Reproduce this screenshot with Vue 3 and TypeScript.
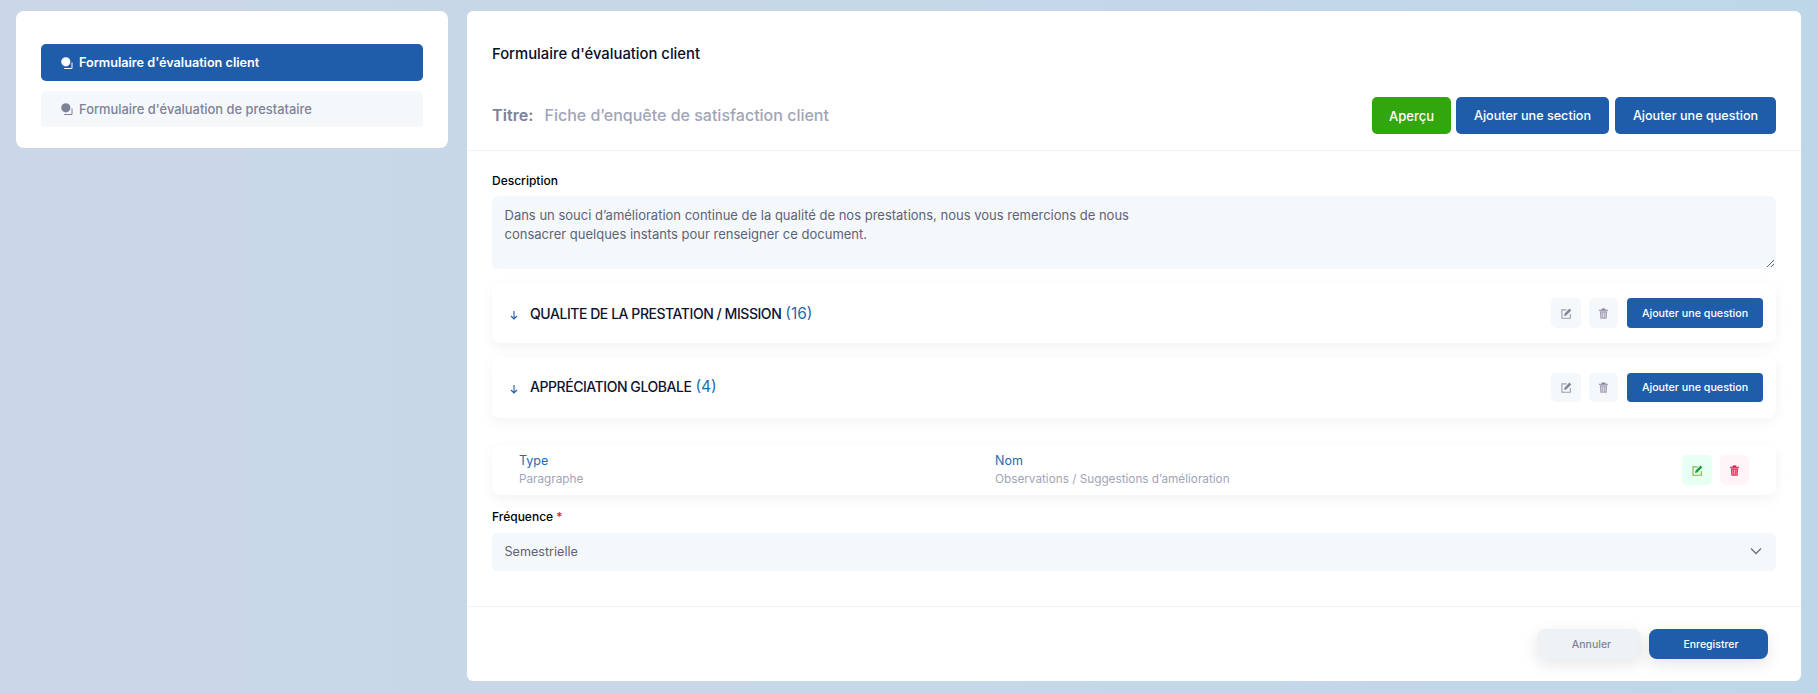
<script setup lang="ts">
const sections = [
  { title: 'QUALITE DE LA PRESTATION / MISSION', count: 16 },
  { title: 'APPRÉCIATION GLOBALE', count: 4 },
]
</script>

<template>
  <div class="page">
    <aside class="side">
      <a class="nav active">
        <svg class="navicon" viewBox="0 0 12 12"><circle cx="4.8" cy="4.8" r="4.6" fill="currentColor"/><path d="M11 5.5v6H3.2" fill="none" stroke="currentColor" stroke-width="1"/></svg>
        Formulaire d'évaluation client
      </a>
      <a class="nav">
        <svg class="navicon" viewBox="0 0 12 12"><circle cx="4.8" cy="4.8" r="4.6" fill="currentColor"/><path d="M11 5.5v6H3.2" fill="none" stroke="currentColor" stroke-width="1"/></svg>
        Formulaire d'évaluation de prestataire
      </a>
    </aside>
    <main class="card">
      <div class="top">
        <h1 class="h">Formulaire d'évaluation client</h1>
        <div class="titlerow">
          <div class="titl"><span class="tl">Titre:</span><span class="tv">Fiche d’enquête de satisfaction client</span></div>
          <div class="acts">
            <button class="btn green">Aperçu</button>
            <button class="btn blue w1">Ajouter une section</button>
            <button class="btn blue w2">Ajouter une question</button>
          </div>
        </div>
      </div>
      <div class="body">
        <label class="lab">Description</label>
        <div class="ta">Dans un souci d’amélioration continue de la qualité de nos prestations, nous vous remercions de nous<br>consacrer quelques instants pour renseigner ce document.
          <svg class="grip" viewBox="0 0 10 10"><path d="M9 2 2 9M9 6 6 9" stroke="#666" fill="none"/></svg>
        </div>
        <div v-for="(s, i) in sections" :key="s.title" class="sec" :class="{ second: i === 1 }">
          <svg class="arrow" viewBox="0 0 12 12"><path d="M6 2v8M3 7l3 3 3-3" fill="none" stroke="#1f5dab" stroke-width="1.1"/></svg>
          <span class="st">{{ s.title }}</span>
          <span class="sc">({{ s.count }})</span>
          <span class="grow"></span>
          <button class="ib ib1">
            <svg class="ic" viewBox="0 0 12 12"><path d="M6 2H1v9.2h9.2V6.5" fill="none" stroke="#9c9eae" stroke-width="1.2"/><path d="M3.4 8.6l.4-2.4L9.2.6l2 2-5.5 5.6z" fill="#83859a"/></svg>
          </button>
          <button class="ib ib2">
            <svg class="ic" viewBox="0 0 12 12"><path d="M1 1.8h10v1.3H1zM4 .6h4v1.4H4z" fill="#83859a"/><path d="M2 3.6h8l-.5 8H2.5z" fill="#a9a2b8"/><path d="M4.2 5v5.5M6 5v5.5M7.8 5v5.5" stroke="#e8e9f2" stroke-width=".8"/></svg>
          </button>
          <button class="sbtn">Ajouter une question</button>
        </div>
        <div class="rowcard">
          <div class="col c1"><div class="k">Type</div><div class="v">Paragraphe</div></div>
          <div class="col c2"><div class="k">Nom</div><div class="v">Observations / Suggestions d’amélioration</div></div>
          <span class="grow"></span>
          <button class="ib g">
            <svg class="ic" viewBox="0 0 12 12"><path d="M6 2H1v9.2h9.2V6.5" fill="none" stroke="#8db33a" stroke-width="1.2"/><path d="M3.4 8.6l.4-2.4L9.2.6l2 2-5.5 5.6z" fill="#14a03c"/></svg>
          </button>
          <button class="ib r">
            <svg class="ic" viewBox="0 0 12 12"><path d="M1 1.8h10v1.3H1zM4 .6h4v1.4H4z" fill="#d4133f"/><path d="M2 3.6h8l-.5 8H2.5z" fill="#e2375f"/><path d="M4.2 5v5.5M6 5v5.5M7.8 5v5.5" stroke="#fbb7cb" stroke-width=".8"/></svg>
          </button>
        </div>
        <label class="lab freq">Fréquence <span class="req">*</span></label>
        <div class="sel">
          <span>Semestrielle</span>
          <svg class="chev" viewBox="0 0 14 14"><path d="M2 4.5l5 5 5-5" fill="none" stroke="#6e7280" stroke-width="1.4"/></svg>
        </div>
      </div>
      <div class="foot">
        <button class="fb cancel">Annuler</button>
        <button class="fb save">Enregistrer</button>
      </div>
    </main>
  </div>
</template>

<style>
html, body { margin: 0; }
</style>

<style scoped>
.page {
  box-sizing: border-box;
  width: 1818px;
  height: 693px;
  padding: 11px 17px 12px 16px;
  display: flex;
  align-items: flex-start;
  gap: 19px;
  overflow: hidden;
  background: linear-gradient(90deg, #cad7e8 0%, #c6d7e8 50%, #bdd7e9 100%);
  font-family: Inter, "Liberation Sans", sans-serif;
  color: #0f1330;
}
.side {
  box-sizing: border-box;
  width: 432px;
  height: 137px;
  flex: none;
  background: #fff;
  border-radius: 8px;
  padding: 33px 25px 0;
  display: flex;
  flex-direction: column;
  gap: 10px;
}
.nav {
  height: 36px;
  border-radius: 5px;
  background: #f5f8fa;
  color: #7e8299;
  display: flex;
  align-items: center;
  padding-left: 20px;
  font-size: 12.9px;
  font-weight: 500;
}
.nav.active { height: 37px; background: #1f5dab; color: #fff; font-weight: 600; font-size: 12.65px; }
.navicon { width: 12px; height: 12px; margin-right: 6px; }
.card {
  flex: 1;
  height: 670px;
  background: #fff;
  border-radius: 6px;
  display: flex;
  flex-direction: column;
}
.top { padding: 35px 25px 16px; border-bottom: 1px solid #eff2f5; }
.h { margin: 0; font-size: 14.8px; font-weight: 500; line-height: 17px; color: #0a0d26; }
.titlerow { display: flex; align-items: center; justify-content: space-between; margin-top: 34px; height: 37px; }
.titl { display: flex; align-items: baseline; gap: 11px; padding-bottom: 2px; }
.tl { font-size: 16.2px; font-weight: 600; color: #7e8299; }
.tv { font-size: 16px; font-weight: 500; color: #a1a5b7; }
.acts { display: flex; gap: 5px; }
.btn {
  height: 37px;
  border: 0;
  border-radius: 5px;
  color: #fff;
  font: 500 13px Inter, "Liberation Sans", sans-serif;
  padding: 0;
}
.green { width: 79px; background: #31a60f; }
.blue { background: #1f5dab; font-size: 12.6px; }
.w1 { width: 153px; }
.w2 { width: 161px; margin-left: 1px; }
.body { padding: 0 25px; flex: 1; display: flex; flex-direction: column; }
.lab { font-size: 12px; font-weight: 500; color: #000; line-height: 16px; margin-top: 22px; }
.ta {
  position: relative;
  box-sizing: border-box;
  margin-top: 7px;
  height: 73px;
  background: #f5f8fa;
  border-radius: 6px;
  padding: 10px 12.5px;
  font-size: 13px;
  line-height: 19px;
  color: #5e6278;
}
.grip { position: absolute; right: 1px; bottom: 1px; width: 10px; height: 10px; }
.sec {
  box-sizing: border-box;
  height: 60px;
  margin-top: 14px;
  background: #fff;
  border-radius: 8px;
  box-shadow: 0 4px 14px rgba(0, 0, 0, 0.05);
  display: flex;
  align-items: center;
  padding: 0 13px 0 16px;
}
.sec.second { height: 61px; }
.sec.second .ib, .sec.second .sbtn { height: 29px; }
.sec.second .st, .sec.second .sc { position: relative; top: -1px; }
.arrow { width: 12px; height: 12px; margin-top: 3px; flex: none; }
.st { margin-left: 10px; font-size: 14px; font-weight: 500; letter-spacing: -0.45px; color: #0f1330; }
.sc { margin-left: 4px; font-size: 15.5px; color: #1f6ab0; }
.grow { flex: 1; }
.ib {
  width: 30px;
  height: 30px;
  border: 0;
  padding: 0;
  border-radius: 5px;
  background: #f5f8fa;
  display: flex;
  align-items: center;
  justify-content: center;
}
.ib1 { margin-right: 8px; }
.ib2 { width: 29px; margin-right: 9px; }
.ic { width: 11px; height: 11px; }
.sbtn {
  width: 136px;
  height: 30px;
  border: 0;
  border-radius: 4px;
  background: #1f5dab;
  color: #fff;
  font: 500 10.7px Inter, "Liberation Sans", sans-serif;
}
.rowcard {
  box-sizing: border-box;
  height: 50px;
  margin-top: 27px;
  background: #fff;
  border-radius: 8px;
  box-shadow: 0 4px 14px rgba(0, 0, 0, 0.05);
  display: flex;
  align-items: center;
  padding: 0 27px;
}
.col { font-size: 12px; }
.c1 { width: 476px; }
.k { color: #1f6ab0; font-size: 12.5px; line-height: 18px; }
.v { color: #a1a5b7; font-size: 11.75px; line-height: 18px; }
.g { background: #e8fff3; margin-right: 8px; }
.r { background: #fff5f8; width: 29px; }
.freq { margin-top: 14px; }
.req { color: #e4173f; }
.sel {
  box-sizing: border-box;
  height: 38px;
  margin-top: 8px;
  background: #f5f8fa;
  border-radius: 6px;
  display: flex;
  align-items: center;
  justify-content: space-between;
  padding: 0 13px 2px 12.5px;
  font-size: 12.6px;
  font-weight: 400;
  color: #5e6278;
}
.chev { width: 14px; height: 14px; }
.foot {
  box-sizing: border-box;
  height: 75px;
  border-top: 1px solid #eff2f5;
  display: flex;
  justify-content: flex-end;
  align-items: flex-start;
  gap: 8px;
  padding: 22px 33px 0 0;
}
.fb {
  height: 30px;
  border: 0;
  border-radius: 8px;
  padding: 0 0 0 5px;
  font: 500 10.5px Inter, "Liberation Sans", sans-serif;
  box-shadow: 0 5px 16px rgba(0, 0, 0, 0.1);
}
.cancel { width: 104px; background: #eff2f5; color: #7e8299; }
.save { width: 119px; background: #1f5dab; color: #fff; }
</style>
